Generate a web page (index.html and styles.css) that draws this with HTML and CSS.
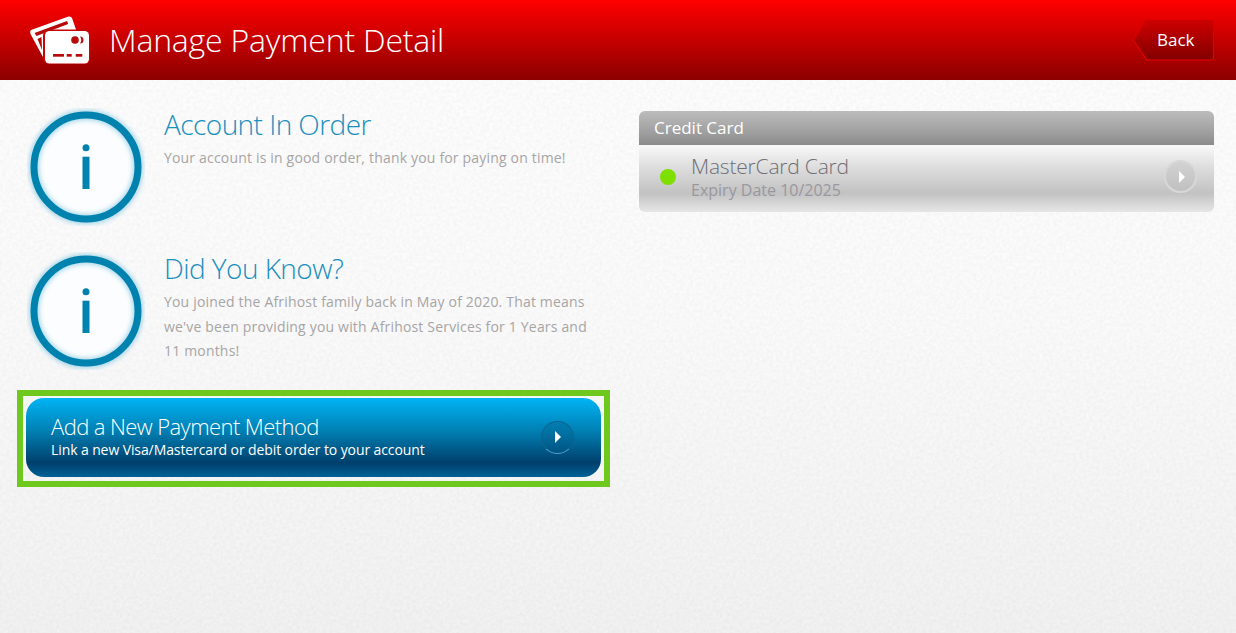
FILE: index.html
```html
<!DOCTYPE html>
<html lang="en">
<head>
<meta charset="utf-8">
<title>Manage Payment Detail</title>
<link rel="stylesheet" href="styles.css">
</head>
<body>
<header class="topbar">
  <div class="brand">
    <svg class="brand-icon" width="62" height="48" viewBox="0 0 62 48">
      <path class="card-back" d="M2 14 L39.500 0.500 Q42 0 43 2 L47.500 15 L18 15 L16 41 L14 41 L1.500 18 Q0.500 15 2 14 Z"/>
      <path class="card-slash" d="M5.500 17 L38 5 L39.200 8 L7.500 20 Z"/>
      <path class="card-slash" d="M8.500 23 L12.500 21 L13 34 Z"/>
      <rect class="card-gap" x="14" y="13.500" width="47.500" height="35" rx="6"/>
      <rect class="card-front" x="16" y="15" width="44" height="32.500" rx="4.500"/>
      <circle class="card-cut" cx="46" cy="24" r="3.800"/>
      <path class="card-cut" d="M51 20.500 A3.500 3.500 0 0 1 51 27.500 A6 6 0 0 0 51 20.500 Z"/>
      <rect class="card-cut" x="24" y="38" width="11" height="2.700"/>
      <rect class="card-cut" x="37.700" y="38" width="5" height="2.700"/>
      <rect class="card-cut" x="46.700" y="38" width="6.600" height="2.700"/>
    </svg>
    <h1 class="page-title">Manage Payment Detail</h1>
  </div>
  <a class="back" href="#"><span class="back-label">Back</span></a>
</header>
<main class="content">
  <section class="left">
    <article class="notice">
      <svg class="info" width="118" height="118" viewBox="0 0 118 118">
        <circle class="info-bg" cx="59" cy="59" r="50"/>
        <circle class="info-glow" cx="59" cy="59" r="52"/>
        <circle class="info-ring" cx="59" cy="59" r="52"/>
        <circle class="info-fill" cx="59" cy="39.700" r="3.500"/>
        <rect class="info-fill" x="55.500" y="48.700" width="7" height="32.300"/>
      </svg>
      <div class="notice-text">
        <h2>Account In Order</h2>
        <p>Your account is in good order, thank you for paying on time!</p>
      </div>
    </article>
    <article class="notice">
      <svg class="info" width="118" height="118" viewBox="0 0 118 118">
        <circle class="info-bg" cx="59" cy="59" r="50"/>
        <circle class="info-glow" cx="59" cy="59" r="52"/>
        <circle class="info-ring" cx="59" cy="59" r="52"/>
        <circle class="info-fill" cx="59" cy="39.700" r="3.500"/>
        <rect class="info-fill" x="55.500" y="48.700" width="7" height="32.300"/>
      </svg>
      <div class="notice-text">
        <h2>Did You Know?</h2>
        <p>You joined the Afrihost family back in May of 2020. That means we've been providing you with Afrihost Services for 1 Years and 11 months!</p>
      </div>
    </article>
    <div class="highlight">
      <a class="add-btn" href="#">
        <span class="add-text">
          <span class="add-title">Add a New Payment Method</span>
          <span class="add-sub">Link a new Visa/Mastercard or debit order to your account</span>
        </span>
        <span class="arrow arrow-blue"></span>
      </a>
    </div>
  </section>
  <section class="right">
    <div class="panel-head">Credit Card</div>
    <a class="panel-row" href="#">
      <span class="dot"></span>
      <span class="card-text">
        <span class="card-name">MasterCard Card</span>
        <span class="card-exp">Expiry Date 10/2025</span>
      </span>
      <span class="arrow arrow-grey"></span>
    </a>
  </section>
</main>
</body>
</html>
```
FILE: styles.css
```css
* { box-sizing: border-box; }
html, body { height: 100%; }
body {
  position: relative;
  margin: 0;
  overflow: hidden;
  font-family: "Open Sans", "Noto Sans", sans-serif;
  background: linear-gradient(#fefefe 0%, #fbfbfb 50%, #f2f2f2 100%);
}
body::before {
  content: "";
  position: absolute;
  inset: 0;
  background-image: url("data:image/svg+xml,%3Csvg xmlns='http://www.w3.org/2000/svg' width='300' height='300'%3E%3Cfilter id='n'%3E%3CfeTurbulence type='fractalNoise' baseFrequency='.3' numOctaves='2' stitchTiles='stitch'/%3E%3CfeColorMatrix values='0 0 0 0 0 0 0 0 0 0 0 0 0 0 0 .05 0 0 0 -.012'/%3E%3C/filter%3E%3Crect width='300' height='300' filter='url(%23n)'/%3E%3C/svg%3E");
}
a { text-decoration: none; }

.topbar {
  position: relative;
  height: 80px;
  display: flex;
  align-items: center;
  justify-content: space-between;
  padding: 0 22px 0 29px;
  background: linear-gradient(#ff0000 0%, #8c0000 100%);
}
.brand { display: flex; align-items: center; gap: 18px; }
.brand-icon { display: block; }
.card-back, .card-front { fill: #fff; }
.card-slash, .card-cut { fill: #b80a0a; }
.card-gap { fill: #c40606; }
.page-title {
  margin: 0;
  color: #fff;
  font-size: 32px;
  font-weight: 300;
  letter-spacing: -0.2px;
  line-height: 40px;
}
.back {
  position: relative;
  width: 81px;
  height: 41px;
  color: #fff;
  font-size: 17px;
  line-height: 40px;
  padding-left: 24px;
  background: linear-gradient(#cc0000, #f00000);
  clip-path: polygon(13px 0, 100% 0, 100% 100%, 13px 100%, 0 50%);
  border-radius: 0 4px 4px 0;
}
.back::before {
  content: "";
  position: absolute;
  inset: 1px;
  background: linear-gradient(#cc0000, #820000);
  clip-path: polygon(13px 0, 100% 0, 100% 100%, 13px 100%, 0 50%);
  border-radius: 0 3px 3px 0;
}
.back-label { position: relative; }

.content {
  position: relative;
  display: grid;
  grid-template-columns: 593px 575px;
  column-gap: 29px;
  padding: 28px 22px 0 17px;
}
.left { display: flex; flex-direction: column; }
.notice {
  display: flex;
  gap: 19px;
  padding-left: 10px;
  min-height: 144px;
}
.info { display: block; flex: none; }
.info-bg { fill: #fbfdfe; }
.info-glow { fill: none; stroke: #7cc4e0; stroke-width: 11; filter: blur(2px); opacity: .6; }
.info-ring { fill: none; stroke: #0082ae; stroke-width: 7; }
.info-fill { fill: #0082ae; }
.notice-text { width: 432px; padding-top: 1px; }
.notice-text h2 {
  margin: 0;
  color: #1a8fc0;
  font-size: 28px;
  font-weight: 300;
  letter-spacing: -0.55px;
  line-height: 30px;
}
.notice-text p {
  margin: 7px 0 0;
  color: #a7a5a5;
  font-size: 14px;
  letter-spacing: 0.18px;
  line-height: 24.500px;
}

.highlight {
  margin-top: -6px;
  width: 593px;
  height: 97px;
  padding: 2px 3px;
  border: 6px solid #6ec81e;
}
.add-btn {
  height: 79px;
  display: flex;
  align-items: center;
  justify-content: space-between;
  padding: 0 27px 0 25px;
  border-radius: 18px;
  background: linear-gradient(#00b4f5 0%, #007fb2 42%, #003f6c 82%, #006296 100%);
  color: #fff;
}
.add-text { display: flex; flex-direction: column; margin-top: -4px; }
.add-title { font-size: 22px; font-weight: 300; letter-spacing: -0.58px; line-height: 26px; }
.add-sub { font-size: 14px; font-weight: 500; letter-spacing: -0.1px; line-height: 18px; margin-top: 2px; }

.arrow {
  position: relative;
  flex: none;
  width: 33px;
  height: 33px;
  border-radius: 50%;
}
.arrow::after {
  content: "";
  position: absolute;
  left: 13px;
  top: 9px;
  border-left: 6px solid #fff;
  border-top: 6px solid transparent;
  border-bottom: 6px solid transparent;
}
.arrow-blue {
  border: 1px solid #14608c;
  border-bottom-color: #4a9fc4;
  background: rgba(0, 90, 135, .3);
}
.arrow-grey {
  border: 2px solid #d8d8d8;
  background: linear-gradient(#d2d2d2, #c0c0c0);
}

.right { padding-top: 3px; }
.panel-head {
  height: 34px;
  padding-left: 15px;
  color: #fff;
  font-size: 17px;
  font-weight: 500;
  line-height: 33px;
  border-radius: 6px 6px 0 0;
  background: linear-gradient(#bcbcbc 0%, #a8a8a8 45%, #8b8b8b 100%);
}
.panel-row {
  height: 67px;
  display: flex;
  align-items: center;
  padding: 0 17px 4px 21px;
  border-radius: 0 0 6px 6px;
  background: linear-gradient(#f9f9f9 0%, #dcdcdc 35%, #c2c2c2 72%, #e6e6e6 100%);
}
.dot {
  flex: none;
  width: 16px;
  height: 16px;
  border-radius: 50%;
  background: #7fe000;
}
.card-text {
  flex: 1;
  display: flex;
  flex-direction: column;
  padding-left: 15px;
}
.card-name { color: #6f6e76; font-size: 21px; font-weight: 300; letter-spacing: -0.2px; line-height: 25px; }
.card-exp { color: #99979f; font-size: 16px; line-height: 19px; margin-top: 2px; }
```
